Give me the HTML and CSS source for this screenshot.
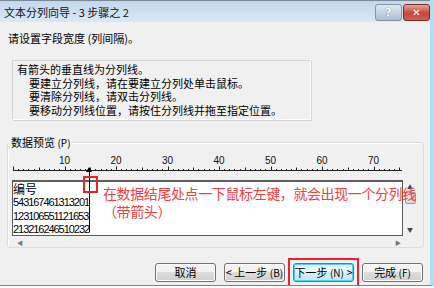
FILE: index.html
```html
<!DOCTYPE html>
<html lang="zh-CN">
<head>
  <meta charset="UTF-8">
  <title>文本分列向导 - 3 步骤之 2</title>
  <link rel="stylesheet" href="styles.css">
</head>
<body>
  <div class="window">
    <div class="titlebar">
      <span class="title">文本分列向导 - 3 步骤之 2</span>
      <div class="caption-btns">
        <span class="cap help">?</span>
        <span class="cap close">✕</span>
      </div>
    </div>

    <div class="intro">请设置字段宽度 (列间隔)。</div>

    <div class="info">
      <div>有箭头的垂直线为分列线。</div>
      <div class="indent">要建立分列线，请在要建立分列处单击鼠标。</div>
      <div class="indent">要清除分列线，请双击分列线。</div>
      <div class="indent">要移动分列线位置，请按住分列线并拖至指定位置。</div>
    </div>

    <div class="group">
      <span class="legend">数据预览 <span class="key">(P)</span></span>
      <svg class="ruler" width="400" height="20" viewBox="0 0 400 20">
        <g id="ticks" stroke="#222" stroke-width="1"></g>
        <g font-family="Liberation Sans, sans-serif" font-size="10" fill="#111" text-anchor="middle">
          <text x="52.5" y="11">10</text>
          <text x="104" y="11">20</text>
          <text x="155.5" y="11">30</text>
          <text x="207" y="11">40</text>
          <text x="258.5" y="11">50</text>
          <text x="310" y="11">60</text>
          <text x="361.5" y="11">70</text>
        </g>
      </svg>
      <div class="preview-wrap">
        <div class="preview">
          <div class="row cjk">编号</div>
          <div class="row">543167461313201</div>
          <div class="row">123106551121653</div>
          <div class="row">213216246510232</div>
        </div>
        <div class="vscroll">
          <span class="arr">▲</span>
          <span class="thumb"></span>
          <span class="arr">▼</span>
        </div>
        <div class="hscroll">
          <span class="arr">◀</span>
          <span class="arr">▶</span>
        </div>
      </div>
    </div>

    <div class="buttons">
      <button class="btn">取消</button>
      <button class="btn">&lt; 上一步 <span class="key">(B)</span></button>
      <button class="btn focus">下一步 <span class="key">(N)</span> &gt;</button>
      <button class="btn">完成 <span class="key">(F)</span></button>
    </div>

    <!-- column break drawn over the preview -->
    <span class="break-arrow"></span>
    <span class="break-line"></span>

    <span class="mark mark-col"></span>
    <span class="mark mark-next"></span>
    <div class="note">
      <div>在数据结尾处点一下鼠标左键，就会出现一个分列线</div>
      <div>（带箭头）</div>
    </div>
  </div>

  <script>
    var g = document.getElementById('ticks');
    var html = '<line x1="1" y1="17.5" x2="390" y2="17.5"/>';
    for (var i = 0; i <= 75; i++) {
      var x = Math.round(1 + i * 5.15) + 0.5;
      var h = i % 10 === 0 ? 4 : (i % 5 === 0 ? 3 : 1.5);
      html += '<line x1="' + x + '" y1="' + (17.5 - h) + '" x2="' + x + '" y2="18"/>';
    }
    g.innerHTML = html;
  </script>
</body>
</html>
```

FILE: styles.css
```css
body { margin: 0; font-family: "Noto Sans CJK SC", "Liberation Sans", sans-serif; font-size: 11px; color: #000; }
.window { position: relative; width: 430px; height: 285px; background: #f0f0f0; border-right: 4px solid #b4dcf2; border-bottom: 1px solid #4a8fc6; box-shadow: 0 2px 0 #111; overflow: hidden; }

.titlebar { height: 21px; display: flex; align-items: center; padding-left: 4px; border-top: 1px solid #7a8898; background: linear-gradient(#c3d7ed, #dbe7f4); }
.title { font-size: 11px; line-height: 14px; color: #111; }
.caption-btns { margin-left: auto; display: flex; gap: 1px; align-self: flex-start; margin-top: 3px; }
.cap { height: 15px; border-radius: 3px; color: #fff; font-weight: bold; font-family: "DejaVu Sans", sans-serif; display: flex; align-items: center; justify-content: center; }
.help { width: 25px; font-size: 11px; border: 1px solid #8394ab; background: linear-gradient(#dfe8f3, #a9bed8); text-shadow: 0 0 1px #556; }
.close { width: 25px; font-size: 10px; border: 1px solid #7d2a22; background: linear-gradient(#e8a496, #c4473a 55%, #d0614f); }

.intro { margin: 9px 0 0 8px; line-height: 14px; }

.info { margin: 15px 0 0 12px; width: 293px; height: 56px; padding: 2px 0 0 4px; border: 1px solid #d4d4d4; border-right-color: #fff; border-bottom-color: #fff; box-shadow: 1px 1px 0 #d4d4d4; line-height: 13.5px; }
.indent { padding-left: 12px; }

.key { font-size: 10px; }

.group { margin: 22px 0 0 7px; width: 415px; height: 104px; border: 1px solid #d5dfe5; border-radius: 3px; box-shadow: inset 1px 1px 0 #fff; }
.legend { display: inline-block; margin: -8px 0 0 2px; padding: 0 2px 0 1px; background: #f0f0f0; line-height: 14px; vertical-align: top; }
.ruler { display: block; margin: -6px 0 0 4px; }

.preview-wrap { display: grid; grid-template-columns: 391px 14px; grid-template-rows: 56px 12px; margin: 7px 0 0 4px; width: 405px; }
.preview { background: #fff; border: 1px solid #5d5d5d; border-top-width: 2px; box-sizing: border-box; overflow: hidden; }
.row { font-family: "Liberation Sans", sans-serif; font-size: 11px; letter-spacing: -1.05px; line-height: 13.5px; white-space: nowrap; }
.row.cjk { font-family: "Noto Sans CJK SC", sans-serif; font-size: 12px; letter-spacing: 0; line-height: 14px; }

.vscroll { display: flex; flex-direction: column; align-items: center; justify-content: space-between; background: #f0f0f0; color: #444; font-size: 6px; padding: 2px 0; }
.vscroll .thumb { width: 11px; height: 12px; margin: 0 0 auto; border: 1px solid #9a9a9a; border-radius: 2px; background: linear-gradient(90deg, #e4e4e4, #cfcfcf); box-sizing: border-box; }
.vscroll .arr:first-child { margin-bottom: 1px; }
.hscroll { grid-column: 1 / 3; display: flex; justify-content: space-between; align-items: center; padding: 0 16px 0 5px; color: #777; font-size: 6px; }

.buttons { display: flex; justify-content: flex-end; gap: 8px; margin: 15px 7px 0 0; }
.btn { width: 61px; height: 19px; padding: 0; white-space: nowrap; font-family: "Noto Sans CJK SC", sans-serif; font-size: 11px; line-height: 15px; color: #000; border: 1px solid #707070; border-radius: 3px; background: linear-gradient(#f2f2f2 45%, #dddddd 50%, #cfcfcf); box-shadow: inset 0 0 0 1px #fcfcfc; }
.btn.focus { border-color: #3c7fb1; box-shadow: inset 0 0 0 1px #48d4f6; background: linear-gradient(#eaf6fd 45%, #d9f0fc 50%, #bee6fd); }

.break-line { position: absolute; left: 89px; top: 172px; width: 1px; height: 60px; background: #000; }
.break-arrow { position: absolute; left: 86px; top: 167px; width: 0; height: 0; border: 3.5px solid transparent; border-top: 0; border-bottom: 5px solid #000; }

.mark { position: absolute; border: 2px solid #e8232b; box-sizing: border-box; }
.mark-col { left: 83px; top: 176px; width: 15px; height: 17px; }
.mark-next { left: 288px; top: 258px; width: 71px; height: 32px; }
.note { position: absolute; left: 103px; top: 184px; color: #f2403f; font-size: 14px; line-height: 18px; letter-spacing: -0.4px; white-space: nowrap; }
```
